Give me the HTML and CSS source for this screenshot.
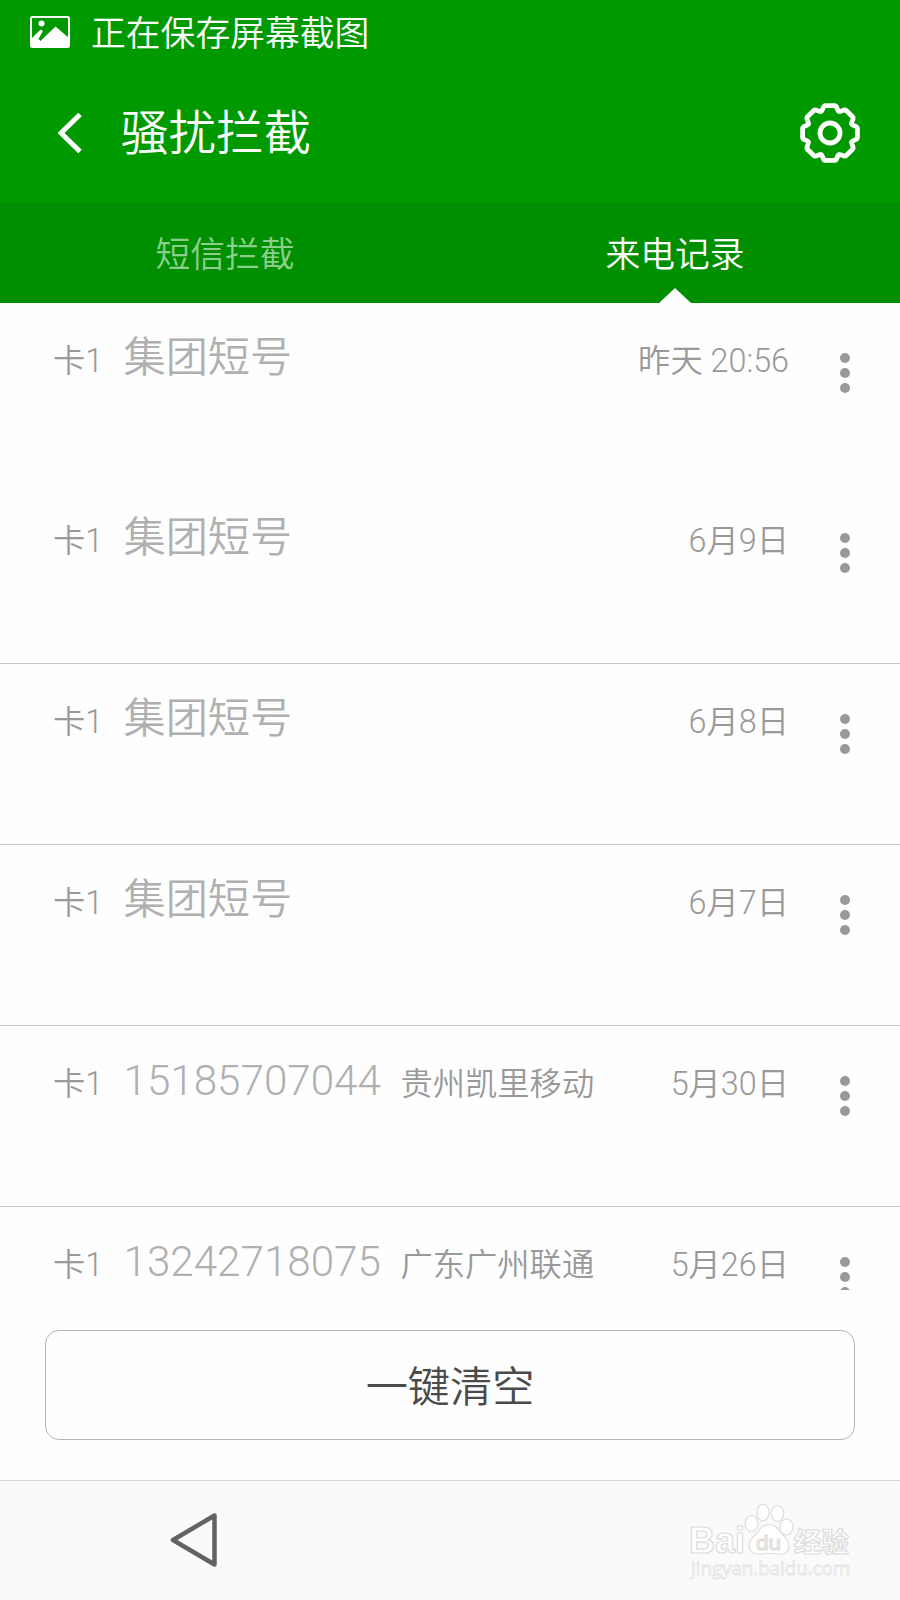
FILE: index.html
```html
<!DOCTYPE html>
<html lang="zh-CN">
<head>
    <meta charset="UTF-8">
    <meta name="viewport" content="width=device-width, initial-scale=1.0">
    <title>骚扰拦截</title>
    <link rel="stylesheet" href="styles.css">
</head>
<body>
    <div class="status-bar">
        <svg class="picture-icon" width="40" height="32" viewBox="0 0 40 32">
            <rect x="1" y="1" width="38" height="30" rx="1.5" fill="none" stroke="#fff" stroke-width="2"/>
            <circle cx="11.5" cy="7.5" r="3" fill="#fff"/>
            <path d="M1 23L10.500 13.500L13 15L8.500 23L10.500 25L25.500 10.500L39 22V31H1Z" fill="#fff"/>
        </svg>
        <span>正在保存屏幕截图</span>
    </div>

    <header class="title-bar">
        <svg class="back-icon" width="24" height="42" viewBox="0 0 24 42">
            <path d="M22 2.500L3 21L22 39.500" fill="none" stroke="#fff" stroke-width="5"/>
        </svg>
        <h1>骚扰拦截</h1>
        <svg class="gear-icon" width="60" height="60" viewBox="-30 -30 60 60" fill="none" stroke="#fff" stroke-width="4.800" stroke-linecap="round">
            <defs>
                <path id="tooth" d="M-9-21.700C-6.500-22.800-7.500-27.400-4.500-27.400H4.500C7.500-27.400 6.500-22.800 9-21.700"/>
            </defs>
            <use href="#tooth"/>
            <use href="#tooth" transform="rotate(45)"/>
            <use href="#tooth" transform="rotate(90)"/>
            <use href="#tooth" transform="rotate(135)"/>
            <use href="#tooth" transform="rotate(180)"/>
            <use href="#tooth" transform="rotate(225)"/>
            <use href="#tooth" transform="rotate(270)"/>
            <use href="#tooth" transform="rotate(315)"/>
            <circle r="10"/>
        </svg>
    </header>

    <nav class="tabs">
        <div class="tab">短信拦截</div>
        <div class="tab active">来电记录</div>
    </nav>

    <ul class="call-list">
        <li class="call no-line">
            <span class="sim">卡1</span>
            <span class="name">集团短号</span>
            <span class="date">昨天 20:56</span>
            <span class="more"><i></i><i></i><i></i></span>
        </li>
        <li class="call">
            <span class="sim">卡1</span>
            <span class="name">集团短号</span>
            <span class="date">6月9日</span>
            <span class="more"><i></i><i></i><i></i></span>
        </li>
        <li class="call">
            <span class="sim">卡1</span>
            <span class="name">集团短号</span>
            <span class="date">6月8日</span>
            <span class="more"><i></i><i></i><i></i></span>
        </li>
        <li class="call">
            <span class="sim">卡1</span>
            <span class="name">集团短号</span>
            <span class="date">6月7日</span>
            <span class="more"><i></i><i></i><i></i></span>
        </li>
        <li class="call">
            <span class="sim">卡1</span>
            <span class="name">15185707044</span>
            <span class="region">贵州凯里移动</span>
            <span class="date">5月30日</span>
            <span class="more"><i></i><i></i><i></i></span>
        </li>
        <li class="call">
            <span class="sim">卡1</span>
            <span class="name">13242718075</span>
            <span class="region">广东广州联通</span>
            <span class="date">5月26日</span>
            <span class="more"><i></i><i></i><i></i></span>
        </li>
    </ul>

    <div class="clear-area">
        <button class="clear-button">一键清空</button>
    </div>

    <footer class="nav-bar">
        <svg class="nav-back" width="48" height="56" viewBox="0 0 48 56">
            <path d="M3 27L44.500 2.500V51.500Z" fill="none" stroke="#636360" stroke-width="4.500" stroke-linejoin="round"/>
        </svg>
        <svg class="watermark" width="170" height="90" viewBox="0 0 170 90">
            <g class="outline">
                <text x="4" y="52" font-size="37" textLength="56" lengthAdjust="spacingAndGlyphs">Bai</text>
                <ellipse cx="66.500" cy="22.500" rx="6.500" ry="8"/>
                <ellipse cx="78" cy="11.500" rx="6" ry="8.300"/>
                <ellipse cx="92.500" cy="12.500" rx="6.200" ry="8"/>
                <ellipse cx="101.500" cy="26" rx="6.500" ry="8"/>
                <path d="M75 28C80 22 88 22 93 28C97 35 104 37 104 45C104 52 98 54 92 53C87 52 82 52 76 53C69 54 64 51 64 44C64 37 71 35 75 28Z"/>
                <text class="du" x="71" y="49" font-size="21" textLength="25" lengthAdjust="spacingAndGlyphs">du</text>
                <text x="109" y="50.500" font-size="27.500">经验</text>
            </g>
            <text class="outline-thin" x="6" y="73.500" font-size="19" textLength="159" lengthAdjust="spacingAndGlyphs">jingyan.baidu.com</text>
        </svg>
    </footer>
</body>
</html>
```

FILE: styles.css
```css
* {
    box-sizing: border-box;
}
body {
    margin: 0;
    width: 900px;
    height: 1600px;
    overflow: hidden;
    display: flex;
    flex-direction: column;
    background-color: #fefefe;
    font-family: Roboto, "Noto Sans CJK SC", sans-serif;
    font-weight: 350;
}
.status-bar {
    height: 64px;
    padding-left: 30px;
    display: flex;
    align-items: center;
    gap: 21px;
    background-color: #009900;
    color: #fff;
    font-size: 34.8px;
    line-height: 64px;
}
.status-bar span {
    padding-top: 3px;
}
.title-bar {
    height: 138px;
    padding: 0 40px 0 58px;
    display: flex;
    align-items: center;
    background-color: #009900;
    color: #fff;
}
.title-bar h1 {
    margin: 0 auto 0 39px;
    padding-top: 3px;
    font-size: 47.5px;
    font-weight: 350;
    line-height: 135px;
}
.tabs {
    height: 101px;
    display: flex;
    background-color: #008f00;
}
.tab {
    position: relative;
    flex: 1;
    padding-top: 3px;
    text-align: center;
    font-size: 34.8px;
    line-height: 101px;
    color: #8ccf8c;
}
.tab.active {
    color: #fff;
}
.tab.active::after {
    content: "";
    position: absolute;
    left: 50%;
    bottom: 0;
    margin-left: -16px;
    border: 16px solid transparent;
    border-top: none;
    border-bottom: 15px solid #fefefe;
}
.call-list {
    height: 987px;
    margin: 0;
    padding: 0;
    overflow: hidden;
    list-style: none;
}
.call {
    height: 181px;
    padding: 20px 50px 0 53px;
    display: flex;
    align-items: baseline;
    border-bottom: 1px solid #c8c8c8;
    color: #999;
    font-size: 32.3px;
    line-height: 70px;
    white-space: nowrap;
}
.call.no-line {
    height: 180px;
    border-bottom: none;
}
.sim {
    width: 70.5px;
}
.name {
    font-size: 42.2px;
    color: #b0b0b0;
}
.region {
    margin-left: 19.5px;
}
.date {
    margin-left: auto;
}
.more {
    align-self: flex-start;
    margin: 30px 0 0 51px;
    display: flex;
    flex-direction: column;
    gap: 5px;
}
.more i {
    width: 10px;
    height: 10px;
    border-radius: 50%;
    background-color: #999;
}
.clear-area {
    height: 190px;
    padding: 40px 45px 0;
}
.clear-button {
    display: block;
    width: 100%;
    height: 110px;
    padding: 0 0 3px;
    border: 1.5px solid #b5b5b5;
    border-radius: 14px;
    background-color: #fefefe;
    color: #4a4a4a;
    font-family: inherit;
    font-size: 42.2px;
    font-weight: 350;
}
.nav-bar {
    position: relative;
    height: 120px;
    padding: 32px 0 0 170px;
    border-top: 1px solid #d6d6d6;
    background-color: #fafafa;
}
.watermark {
    position: absolute;
    left: 685px;
    top: 20px;
}
.outline {
    fill: #fff;
    stroke: #dcdcdc;
    stroke-width: 1.2px;
    font-family: "Liberation Sans", "Noto Sans CJK SC", sans-serif;
    font-weight: 700;
}
.du {
    font-weight: 400;
}
.outline-thin {
    fill: #fff;
    stroke: #e2e2e2;
    stroke-width: 0.8px;
    font-family: "Open Sans", sans-serif;
    font-weight: 400;
}
```
